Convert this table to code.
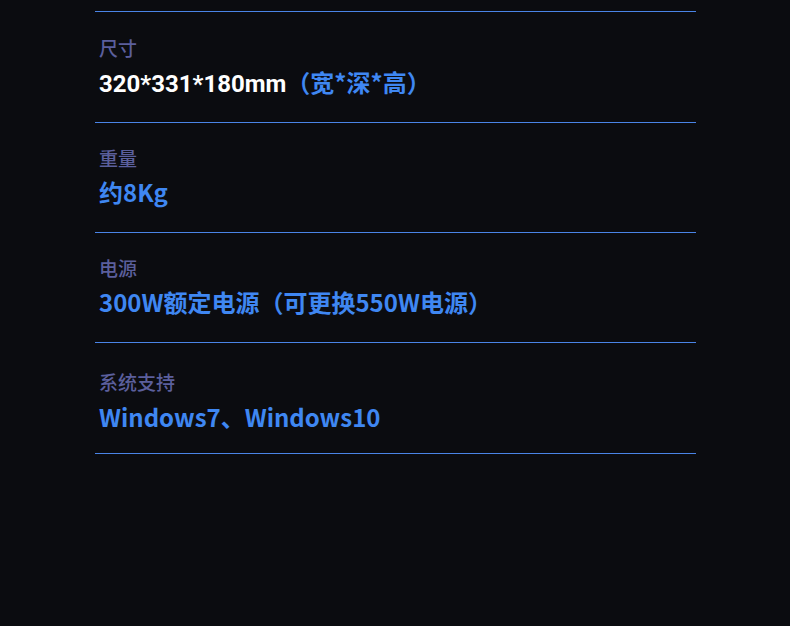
const SPECS = [
  { label: '尺寸', value: '320*331*180mm', extra: '（宽*深*高）', pad: 'pt-[22px] pb-[23px]', gap: 'mt-[4px]' },
  { label: '重量', value: '', extra: '约8Kg', pad: 'pt-[21px] pb-[23px]', gap: 'mt-[4px]' },
  { label: '电源', value: '', extra: '300W额定电源（可更换550W电源）', pad: 'pt-[21px] pb-[23px]', gap: 'mt-[4px]' },
  { label: '系统支持', value: '', extra: 'Windows7、Windows10', pad: 'pt-[25px] pb-[19px]', gap: 'mt-[5px]' },
];

const CJK = { fontFamily: '"Noto Sans CJK SC", sans-serif' };
const LATIN = { fontFamily: 'Roboto, "Noto Sans CJK SC", sans-serif' };

export default function App() {
  return (
    <div className="min-h-[626px] w-full bg-[#0b0c10] pt-[11px]" style={CJK}>
      <div className="ml-[95px] w-[601px]">
        <div className="h-px bg-[#4a84e6]" />
        {SPECS.map((s) => (
          <div key={s.label}>
            <div className={`pl-[4px] ${s.pad}`}>
              <p className="text-[19px] leading-[27px] font-medium text-[#5b5f9c]">{s.label}</p>
              <p className={`${s.gap} h-[34px] text-[24px] leading-[34px] font-bold whitespace-nowrap`}>
                {s.value && (
                  <span className="text-white" style={LATIN}>
                    {s.value}
                  </span>
                )}
                <span className="text-[#3f87f2]">{s.extra}</span>
              </p>
            </div>
            <div className="h-px bg-[#4a84e6]" />
          </div>
        ))}
      </div>
    </div>
  );
}
